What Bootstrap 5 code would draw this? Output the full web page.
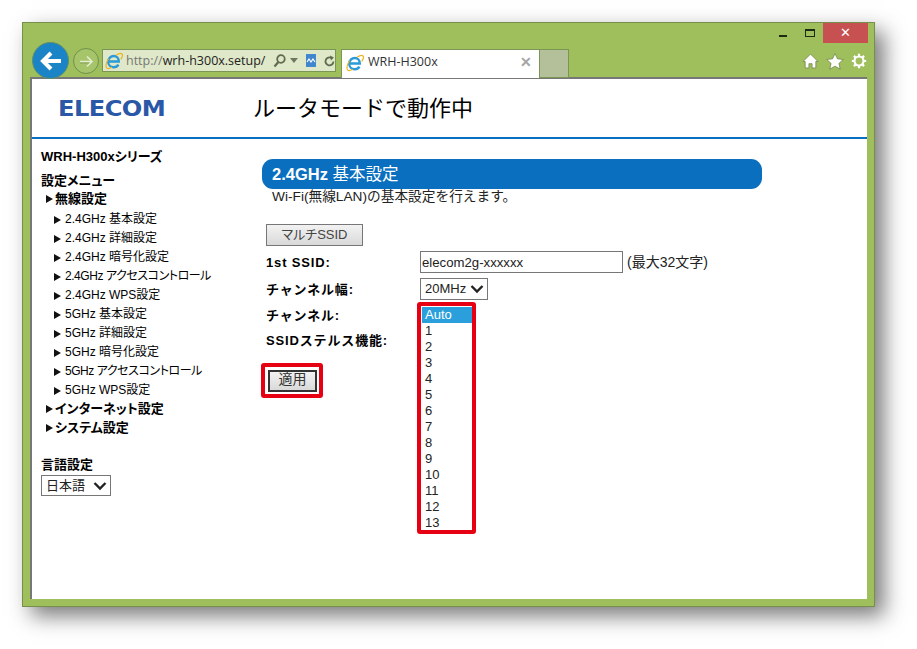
<!DOCTYPE html>
<html lang="ja">
<head>
    <meta charset="UTF-8">
    <meta name="viewport" content="width=device-width, initial-scale=1.0">
    <title>WRH-H300x</title>
    <link href="https://cdn.jsdelivr.net/npm/bootstrap@5.3.0/dist/css/bootstrap.min.css" rel="stylesheet">
    <style>
        html, body { height: 100%; }
        body {
            background: #fff;
            color: #000;
            font-family: "Liberation Sans", "Noto Sans CJK JP", sans-serif;
            font-size: 13px;
            overflow: hidden;
        }
        /* browser window */
        .ie-window {
            width: 853px;
            height: 585px;
            margin: 22px 0 0 22px;
            background: #9ebf5c;
            border: 1px solid #76904c;
            box-shadow: 9px 9px 20px rgba(50, 50, 50, .65);
        }
        .ie-titlebar { height: 54px; }
        .ie-controls { height: 26px; }
        .ie-min { width: 8px; height: 2px; background: #1d2a14; margin: 12px 0 0 756px; }
        .ie-max { width: 10px; height: 8px; border: 1px solid #1d2a14; border-top-width: 2px; margin: 6px 0 0 18px; }
        .ie-close {
            width: 45px; height: 20px; margin-left: 8px;
            background: #c75050; color: #fff; font-size: 13px; line-height: 20px; text-align: center;
        }
        .ie-nav { height: 29px; padding-left: 9px; }
        .ie-back { width: 37px; height: 37px; margin-top: -7px; border-radius: 50%; background: #1a84c6; border: 1px solid #5f8f6a; flex: none; }
        .ie-forward { width: 26px; height: 26px; margin: -1px 3px 0 4px; border-radius: 50%; border: 1px solid #70914a; flex: none; background: #a6c46a; }
        .ie-address {
            width: 234px; height: 23px; background: #dfe8c8; border: 1px solid #7b9553;
            font-family: "Open Sans", sans-serif; font-size: 12.5px; line-height: 21px; color: #222;
            padding-left: 2px; flex: none;
        }
        .ie-url { width: 143px; margin-left: 3px; white-space: nowrap; }
        .ie-url span { color: #777; }
        .ie-search { margin-left: 5px; }
        .ie-tab {
            width: 199px; height: 29px; margin-left: 5px; padding: 0 7px 3px 4px; background: #fff; flex: none;
            border: 1px solid #7b9553; border-bottom: 0; font-family: "Open Sans", sans-serif; font-size: 12.5px; color: #333;
        }
        .ie-tab-x { color: #a5a5a5; font-size: 14px; font-weight: 700; font-family: "Liberation Sans", sans-serif; }
        .ie-newtab { width: 29px; height: 29px; background: #b4c09a; border: 1px solid #7b9553; border-left: 0; flex: none; }
        .ie-tools { margin-left: 233px; gap: 7px; height: 24px; }
        /* page */
        .ie-page {
            width: 837px; height: 522px; margin-left: 7px; background: #fff;
            border-left: 2px solid #777; border-top: 2px solid #777;
        }
        .page-head { height: 60px; border-bottom: 2px solid #0a6fbe; }
        .logo-word {
            width: 181px; padding-left: 26px; padding-top: 2px; color: #2b57a7;
            font-family: "DejaVu Sans", sans-serif; font-weight: 700; font-size: 21px; line-height: 24px;
            letter-spacing: -.5px;
        }
        .logo-word span { display: inline-block; transform: scaleX(1.15); transform-origin: left; }
        .mode-title { margin: 0 0 5px 40px; font-family: "Noto Sans CJK JP", sans-serif; font-size: 22px; font-weight: 400; line-height: 30px; }
        .side-col { width: 230px; padding: 8px 0 0 9px; flex: none; font-feature-settings: "palt"; }
        .side-title { font-weight: 700; line-height: 19px; }
        .side-menu-label { margin-top: 7px; font-weight: 700; line-height: 16px; }
        .menu-main, .menu-sub { display: flex; align-items: center; line-height: 19px; height: 19px; white-space: nowrap; }
        .menu-main { padding-left: 5px; font-weight: 700; }
        .menu-main.first-open { margin-bottom: 2px; }
        .menu-sub { padding-left: 13px; font-size: 12px; }
        .menu-sub.last-open { margin-bottom: -1px; }
        .menu-sub.long-name { letter-spacing: -.45px; }
        .arrow-tri {
            width: 0; height: 0; margin-right: 2px; flex: none;
            border-left: 7px solid #111; border-top: 4px solid transparent; border-bottom: 4px solid transparent;
        }
        .menu-sub .arrow-tri { margin-right: 4px; }
        .lang-label { margin-top: 18px; font-weight: 700; line-height: 19px; }
        .form-select {
            --bs-form-select-bg-img: url("data:image/svg+xml,%3csvg xmlns='http://www.w3.org/2000/svg' viewBox='0 0 14 10'%3e%3cpath fill='none' stroke='%23222' stroke-width='2.4' d='M1.5 2 7 7.5 12.5 2'/%3e%3c/svg%3e");
        }
        .lang-select.form-select {
            width: 70px; height: 21px; margin-top: 1px; padding: 0 0 0 4px; border: 1px solid #777; border-radius: 0; font-size: 13px; color: #222;
            font-family: "Liberation Sans", "Noto Sans CJK JP", sans-serif; line-height: 19px;
            background-position: right 3px center; background-size: 14px 10px;
        }
        .main-col { width: 500px; padding-top: 20px; position: relative; }
        .blue-bar {
            height: 30px; background: #0a6fbe; color: #fff; border-radius: 11px; padding-left: 10px;
            font-size: 16.5px; line-height: 30px;
        }
        .blue-bar b { font-weight: 700; }
        .bar-note { padding-left: 10px; line-height: 16px; color: #222; font-size: 13.7px; }
        .form-area { padding-left: 4px; }
        .multi-btn {
            display: block; width: 97px; height: 22px; margin-top: 19px; padding: 0; border: 1px solid #777; border-radius: 0;
            background: linear-gradient(#f2f2f2, #d9d9d9); color: #444; font-size: 13px; line-height: 20px; font-feature-settings: "palt";
        }
        .field-row { display: flex; align-items: center; margin-top: 5px; }
        .field-row.label-only { height: 20px; }
        .field-name { width: 154px; flex: none; font-weight: 700; letter-spacing: .85px; padding-top: 2px; }
        .ssid-input.form-control {
            width: 203px; height: 22px; padding: 0 1px; border: 1px solid #777; border-radius: 0; font-size: 13.2px; color: #222;
        }
        .ssid-note { font-size: 14px; color: #222; }
        .width-select.form-select {
            width: 68px; height: 22px; padding: 0 0 0 4px; border: 1px solid #777; border-radius: 0; font-size: 13px; color: #222;
            background-position: right 3px center; background-size: 14px 10px;
        }
        .apply-frame {
            display: inline-block; margin: 13px 0 0 -5px; padding: 3px 2px 2px 3px; border: 4px solid #e60012; border-radius: 3px; line-height: 0;
        }
        .apply-btn {
            width: 49px; height: 22px; padding: 0 0 4px; border: 2px solid #333; border-radius: 0;
            background: linear-gradient(#f2f2f2, #d9d9d9); color: #333; font-size: 14px; line-height: 14px;
        }
        /* opened channel list, lies over the form */
        .channel-list {
            position: absolute; left: 155px; top: 163px; width: 59px; height: 232px; margin: 0;
            border: 4px solid #e60012; border-radius: 3px; background: #fff; padding: 1px 0 1px 1px; list-style: none;
            color: #222; font-size: 13px;
        }
        .channel-list li { height: 16px; line-height: 16px; padding-left: 3px; }
        .channel-list li.picked { background: #2b9fdc; color: #fff; }
    </style>
</head>
<body>
    <svg width="0" height="0" class="position-absolute">
        <symbol id="ie-logo" viewBox="0 0 18 18">
            <path d="M3.2 9.5h10.6C13.8 6.3 11.6 4 8.8 4 5.8 4 3.2 6.5 3.2 9.7s2.4 5.5 5.5 5.5c2.2 0 3.8-1 4.7-2.6" fill="none" stroke="#2b9ad9" stroke-width="2.4"/>
            <path d="M3.5 6.5C1.5 10 .3 14 1.6 15.8c1 1.3 3 .8 5.2-.6M11 3.2c2.6-1.6 5-2.2 6-1.2 1 1 .2 3.2-1.2 5.4" fill="none" stroke="#eeb422" stroke-width="1.2"/>
        </symbol>
    </svg>

    <div class="ie-window">
        <div class="ie-titlebar">
            <div class="ie-controls d-flex">
                <div class="ie-min"></div>
                <div class="ie-max"></div>
                <div class="ie-close">✕</div>
            </div>
            <div class="ie-nav d-flex align-items-start">
                <div class="ie-back d-flex align-items-center justify-content-center">
                    <svg width="24" height="22" viewBox="0 0 24 22"><path d="M12 3 4 11l8 8M4 11h18" fill="none" stroke="#fff" stroke-width="4"/></svg>
                </div>
                <div class="ie-forward d-flex align-items-center justify-content-center">
                    <svg width="15" height="13" viewBox="0 0 15 13"><path d="M8 1.5 13 6.5 8 11.5M13 6.5H1" fill="none" stroke="#e4edcf" stroke-width="1.6"/><path d="M1 8h9" stroke="#7f9a55" stroke-width=".8"/></svg>
                </div>
                <div class="ie-address d-flex align-items-center">
                    <svg width="18" height="18" class="flex-shrink-0"><use href="#ie-logo"/></svg>
                    <div class="ie-url"><span>http://</span>wrh-h300x.setup/</div>
                    <svg class="ie-search" width="13" height="14" viewBox="0 0 13 14"><circle cx="8" cy="5" r="3.8" fill="none" stroke="#5f6b50" stroke-width="1.8"/><path d="M5.4 8 1.5 12.5" stroke="#5f6b50" stroke-width="2.2"/></svg>
                    <svg class="ms-1" width="8" height="5" viewBox="0 0 8 5"><path d="M0 0h8L4 5z" fill="#6d775f"/></svg>
                    <svg class="ms-2" width="10" height="13" viewBox="0 0 10 13"><rect width="10" height="13" fill="#3f86cf"/><path d="M1 8l2-3 2 3 2-3 2 3" fill="none" stroke="#fff" stroke-width="1.2"/></svg>
                    <svg class="ms-2" width="11" height="12" viewBox="0 0 11 12"><path d="M9.5 6.5A4 4 0 1 1 7.6 3" fill="none" stroke="#5f6b50" stroke-width="1.8"/><path d="M6 .5l4 2-3 3z" fill="#5f6b50"/></svg>
                </div>
                <div class="ie-tab d-flex align-items-center">
                    <svg width="18" height="18"><use href="#ie-logo"/></svg>
                    <span class="ms-1 flex-grow-1">WRH-H300x</span>
                    <span class="ie-tab-x">✕</span>
                </div>
                <div class="ie-newtab"></div>
                <div class="ie-tools d-flex align-items-center">
                    <svg width="17" height="16" viewBox="0 0 16 15"><path d="M8 1 1 8h2v6h3.5v-4h3v4H13V8h2z" fill="#fff" stroke="#5d7338" stroke-width=".6"/></svg>
                    <svg width="18" height="17" viewBox="0 0 17 16"><path d="M8.5.5l2.3 5 5.5.6-4.1 3.7 1.2 5.4-4.9-2.8-4.9 2.8 1.2-5.4L.7 6.1l5.5-.6z" fill="#fff" stroke="#5d7338" stroke-width=".6"/></svg>
                    <svg width="16" height="16" viewBox="0 0 16 16"><circle cx="8" cy="8" r="4.5" fill="none" stroke="#fff" stroke-width="2.2"/><path d="M8 .8v3M8 12.2v3M.8 8h3M12.2 8h3M2.9 2.9l2.1 2.1M11 11l2.1 2.1M13.1 2.9 11 5M5 11l-2.1 2.1" stroke="#fff" stroke-width="2.2"/></svg>
                </div>
            </div>
        </div>

        <div class="ie-page">
            <div class="page-head d-flex align-items-center">
                <div class="logo-word"><span>ELECOM</span></div>
                <h1 class="mode-title">ルータモードで動作中</h1>
            </div>
            <div class="d-flex">
                <div class="side-col">
                    <div class="side-title">WRH-H300xシリーズ</div>
                    <div class="side-menu-label">設定メニュー</div>
                    <div class="menu-main first-open"><i class="arrow-tri"></i>無線設定</div>
                    <div class="menu-sub"><i class="arrow-tri"></i>2.4GHz 基本設定</div>
                    <div class="menu-sub"><i class="arrow-tri"></i>2.4GHz 詳細設定</div>
                    <div class="menu-sub"><i class="arrow-tri"></i>2.4GHz 暗号化設定</div>
                    <div class="menu-sub long-name"><i class="arrow-tri"></i>2.4GHz アクセスコントロール</div>
                    <div class="menu-sub"><i class="arrow-tri"></i>2.4GHz WPS設定</div>
                    <div class="menu-sub"><i class="arrow-tri"></i>5GHz 基本設定</div>
                    <div class="menu-sub"><i class="arrow-tri"></i>5GHz 詳細設定</div>
                    <div class="menu-sub"><i class="arrow-tri"></i>5GHz 暗号化設定</div>
                    <div class="menu-sub long-name"><i class="arrow-tri"></i>5GHz アクセスコントロール</div>
                    <div class="menu-sub last-open"><i class="arrow-tri"></i>5GHz WPS設定</div>
                    <div class="menu-main"><i class="arrow-tri"></i>インターネット設定</div>
                    <div class="menu-main"><i class="arrow-tri"></i>システム設定</div>
                    <div class="lang-label">言語設定</div>
                    <select class="lang-select form-select"><option>日本語</option></select>
                </div>
                <div class="main-col">
                    <div class="blue-bar"><b>2.4GHz</b> 基本設定</div>
                    <div class="bar-note">Wi-Fi(無線LAN)の基本設定を行えます。</div>
                    <div class="form-area">
                        <button type="button" class="multi-btn">マルチSSID</button>
                        <div class="field-row">
                            <div class="field-name">1st SSID:</div>
                            <input class="ssid-input form-control" type="text" value="elecom2g-xxxxxx">
                            <span class="ssid-note ms-1">(最大32文字)</span>
                        </div>
                        <div class="field-row">
                            <div class="field-name">チャンネル幅:</div>
                            <select class="width-select form-select"><option>20MHz</option></select>
                        </div>
                        <div class="field-row label-only">
                            <div class="field-name">チャンネル:</div>
                        </div>
                        <div class="field-row label-only">
                            <div class="field-name">SSIDステルス機能:</div>
                        </div>
                        <div class="apply-frame"><button type="button" class="apply-btn">適用</button></div>
                    </div>
                    <ul class="channel-list">
                        <li class="picked">Auto</li>
                        <li>1</li><li>2</li><li>3</li><li>4</li><li>5</li><li>6</li>
                        <li>7</li><li>8</li><li>9</li><li>10</li><li>11</li><li>12</li><li>13</li>
                    </ul>
                </div>
            </div>
        </div>
    </div>

    <script src="https://cdn.jsdelivr.net/npm/bootstrap@5.3.0/dist/js/bootstrap.bundle.min.js"></script>
</body>
</html>
